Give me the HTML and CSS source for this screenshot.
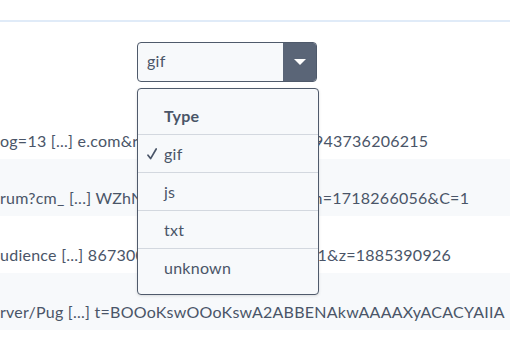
FILE: index.html
```html
<!DOCTYPE html>
<html lang="en">
<head>
    <meta charset="UTF-8">
    <title>Requests</title>
    <link rel="stylesheet" href="styles.css">
</head>
<body>

<div class="top-bar"></div>

<div class="filter">
    <div class="select-wrap">
        <div class="select-value">gif</div>
        <div class="select-arrow"><span class="caret"></span></div>
    </div>

    <div class="menu">
        <div class="menu-item menu-head">Type</div>
        <div class="menu-item">
            <span class="check">
                <svg width="10" height="12" viewBox="0 0 10 12"><path d="M1 7.2 L3.6 10.6 L9.2 1" fill="none" stroke="#4a5568" stroke-width="1.7" stroke-linecap="round" stroke-linejoin="round"/></svg>
            </span>gif
        </div>
        <div class="menu-item"><span class="check"></span>js</div>
        <div class="menu-item"><span class="check"></span>txt</div>
        <div class="menu-item"><span class="check"></span>unknown</div>
    </div>
</div>

<div class="rows">
    <div class="row">og=13 [...] e.com&amp;ref=https%3a%2f&amp;rnd=1943736206215</div>
    <div class="row striped">rum?cm_ [...] WZhNzW2Y2E0ZTk3M2M&amp;bn=1718266056&amp;C=1</div>
    <div class="row">udience [...] 8673001&amp;c1=2&amp;c2=300570411&amp;z=1885390926</div>
    <div class="row striped">rver/Pug [...] t=BOOoKswOOoKswA2ABBENAkwAAAAXyACACYAIIA</div>
</div>

</body>
</html>
```

FILE: styles.css
```css
body {
    margin: 0;
    font-family: Lato, "Open Sans", sans-serif;
    letter-spacing: 0.25px;
    color: #4a5568;
    background-color: white;
    overflow: hidden;
}
.top-bar {
    height: 20px;
    border-bottom: 2px solid #e0ebf8;
}
.filter {
    position: relative;
    padding: 20px 0 20px 137px;
}
.select-wrap {
    display: flex;
    width: 180px;
    height: 40px;
    box-sizing: border-box;
    border: 1px solid #4f5a6b;
    border-radius: 4px;
    background-color: #f7f9fb;
    overflow: hidden;
}
.select-value {
    flex: 1;
    padding-left: 9px;
    line-height: 36px;
    font-size: 16px;
}
.select-arrow {
    width: 33px;
    background-color: #5a6577;
    display: flex;
    align-items: center;
    justify-content: center;
}
.caret {
    width: 0;
    height: 0;
    border-left: 6px solid transparent;
    border-right: 6px solid transparent;
    border-top: 6px solid white;
}
.menu {
    position: absolute;
    top: 66px;
    left: 137px;
    width: 182px;
    box-sizing: border-box;
    padding: 8px 0;
    border: 1px solid #4f5a6b;
    border-radius: 4px;
    background-color: #f7f9fb;
    box-shadow: 0 1px 3px rgba(0, 0, 0, 0.12);
    z-index: 2;
}
.menu-item {
    display: flex;
    align-items: center;
    height: 38px;
    box-sizing: border-box;
    padding-left: 9px;
    border-bottom: 1px solid #d3d8df;
    font-size: 16px;
}
.menu-item:last-child {
    border-bottom: none;
    height: 37px;
}
.menu-head {
    padding-left: 26px;
    font-weight: bold;
}
.check {
    width: 17px;
    display: flex;
    align-items: center;
}
.row {
    height: 57px;
    box-sizing: border-box;
    padding-top: 29px;
    line-height: 20px;
    font-size: 16px;
    white-space: nowrap;
    overflow: hidden;
}
.striped {
    background-color: #f7f9fb;
}
```
